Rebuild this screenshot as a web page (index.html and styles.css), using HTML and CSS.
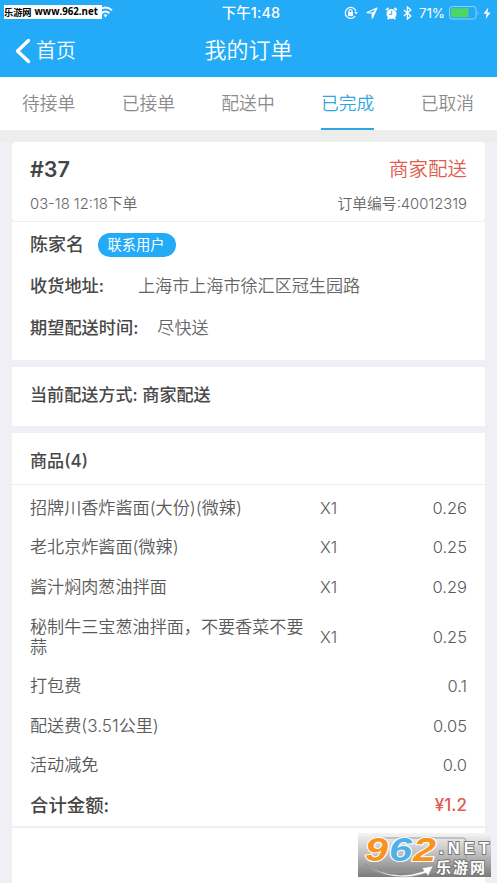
FILE: index.html
```html
<!DOCTYPE html>
<html lang="zh-CN">
<head>
<meta charset="utf-8">
<title>我的订单</title>
<link rel="stylesheet" href="styles.css">
</head>
<body>
<header class="top">
  <div class="status">
    <svg class="wifi" width="15" height="12" viewBox="0 0 15 12" fill="none" stroke="#fff" stroke-width="2"><path d="M1 4.2Q7.5-1.2 14 4.2M3.6 7.1Q7.5 4 11.4 7.1"/><path d="M5.5 9.1Q7.5 7.6 9.5 9.1L7.5 11.4Z" fill="#fff" stroke="none"/></svg>
    <span class="clock">下午1:48</span>
    <div class="status-right">
      <svg width="14" height="14" viewBox="0 0 14 14" fill="none" stroke="#fff" stroke-width="1.2"><path d="M11.2 10.2A5.5 5.5 0 1 1 12 5.2"/><path d="M10.3 6.1h3.4L12 8.6Z" fill="#fff" stroke="none"/><rect x="4" y="6.1" width="5" height="4" fill="#fff" stroke="none"/><path d="M5 6.3V5a1.5 1.5 0 0 1 3 0v1.3"/></svg>
      <svg class="gap-a" width="12" height="12" viewBox="0 0 12 12" fill="none" stroke="#fff" stroke-width="1.1" stroke-linejoin="round"><path d="M11 1L1 5.6l5 .4.3 5.2Z"/><path d="M11 1L6 6l.3 5.2Z" fill="#fff" stroke="none"/></svg>
      <svg class="gap-b" width="13" height="13" viewBox="0 0 13 13"><circle cx="6.5" cy="7" r="5" fill="#fff"/><path d="M1.2 3.2L3.5 1M9.5 1l2.3 2.2M2.8 12.2l1-1.4M10.2 12.2l-1-1.4" stroke="#fff" stroke-width="1.8"/><path d="M6.7 3.8v3.5H4" fill="none" stroke="#24abf7"/></svg>
      <svg class="gap-c" width="9" height="14" viewBox="0 0 9 14" fill="none" stroke="#fff" stroke-width="1.3"><path d="M.8 4l7 6-3.4 3V1l3.4 3-7 6"/></svg>
      <span class="percent">71%</span>
      <svg width="43" height="14" viewBox="0 0 43 14"><rect x=".5" y=".5" width="26.5" height="12.5" rx="2.5" fill="none" stroke="#8fd2f8"/><rect x="2" y="2.3" width="17.5" height="9" rx="1" fill="#4bd764"/><path d="M28.6 5q2 2 0 4Z" fill="#8fd2f8"/><path d="M39.3 1.5L34.5 7.8h3L36.6 13l5-6.6h-3.2Z" fill="#fff"/></svg>
    </div>
    <div class="site-label"><b>乐游网</b><b class="site-url">www.962.net</b></div>
  </div>
  <nav class="nav">
    <a class="back"><svg width="16" height="26" viewBox="0 0 16 26" fill="none" stroke="#fff" stroke-width="3.4" stroke-linecap="round" stroke-linejoin="round"><path d="M13.5 2.5L2.5 13l11 10.5"/></svg><span>首页</span></a>
    <h1>我的订单</h1>
  </nav>
</header>
<div class="tabs">
  <span class="tab">待接单</span><span class="tab">已接单</span><span class="tab">配送中</span><span class="tab active">已完成</span><span class="tab">已取消</span>
</div>
<main>
  <section class="card summary">
    <div class="line"><b class="num">#37</b><span class="mode">商家配送</span></div>
    <div class="line meta"><span>03-18 12:18下单</span><span>订单编号:40012319</span></div>
  </section>
  <section class="card customer">
    <div class="field"><b class="name">陈家名</b><button class="contact">联系用户</button></div>
    <div class="field"><b>收货地址:</b><span class="address">上海市上海市徐汇区冠生园路</span></div>
    <div class="field"><b>期望配送时间:</b><span class="when">尽快送</span></div>
  </section>
  <section class="card method"><b>当前配送方式: 商家配送</b></section>
  <section class="card goods">
    <h2>商品(4)</h2>
    <div class="rows">
      <div class="row"><span>招牌川香炸酱面(大份)(微辣)</span><i>X1</i><em>0.26</em></div>
      <div class="row"><span>老北京炸酱面(微辣)</span><i>X1</i><em>0.25</em></div>
      <div class="row"><span>酱汁焖肉葱油拌面</span><i>X1</i><em>0.29</em></div>
      <div class="row tall"><span>秘制牛三宝葱油拌面，不要香菜不要蒜</span><i>X1</i><em>0.25</em></div>
      <div class="row"><span>打包费</span><i></i><em>0.1</em></div>
      <div class="row"><span>配送费(3.51公里)</span><i></i><em>0.05</em></div>
      <div class="row"><span>活动减免</span><i></i><em>0.0</em></div>
      <div class="row total"><span>合计金额:</span><i></i><em>¥1.2</em></div>
    </div>
  </section>
  <section class="card actions"></section>
</main>
<div class="watermark">
  <svg width="133" height="44" viewBox="0 0 133 44">
    <defs><linearGradient id="shade" x1="0" y1="0" x2="0" y2="1"><stop offset="0" stop-color="#f4f4f4"/><stop offset=".5" stop-color="#bcbcbc"/><stop offset="1" stop-color="#7b7b7b"/></linearGradient></defs>
    <rect width="133" height="44" fill="url(#shade)"/>
    <rect x="14" y="5" width="94" height="34" rx="3" fill="none" stroke="#999"/>
    <g class="digits"><text x="7" y="28" fill="#f7931e" textLength="23" lengthAdjust="spacingAndGlyphs">9</text><text x="31" y="28" fill="#4fb0e8" textLength="23" lengthAdjust="spacingAndGlyphs">6</text><text x="55" y="28" fill="#f7931e" textLength="23" lengthAdjust="spacingAndGlyphs">2</text></g>
    <text class="net" x="81" y="21" textLength="50">.NET</text>
    <text class="cn" x="78" y="40" textLength="49">乐游网</text>
    <path d="M7 31Q34 49 66 38L64 35l11-2-5 10-2-3Q34 51 7 31Z" fill="#fff" stroke="#888" stroke-width=".5"/>
  </svg>
</div>
</body>
</html>
```
FILE: styles.css
```css
* { box-sizing: border-box; }
body {
  margin: 0;
  height: 883px;
  overflow: hidden;
  position: relative;
  background: #efeff5;
  color: #5a5a5a;
  font: 350 17.1px/20px Inter, "Noto Sans CJK SC", sans-serif;
}
b, h1, h2, i, em { font-weight: inherit; font-style: normal; margin: 0; }
.top { height: 77px; background: #24abf7; color: #fff; }
.status { position: relative; height: 26px; display: flex; align-items: center; justify-content: center; }
.wifi { position: absolute; left: 98px; top: 6px; }
.clock { font-size: 14.4px; font-weight: 500; letter-spacing: .15px; padding-left: 5px; }
.status-right { position: absolute; right: 5px; top: 0; height: 26px; display: flex; align-items: center; }
.gap-a { margin-left: 8px; }
.gap-b { margin-left: 7px; }
.gap-c { margin-left: 5px; }
.percent { margin: 0 4px 0 7px; font-size: 13.5px; font-weight: 400; width: 26px; white-space: nowrap; letter-spacing: -.2px; }
.site-label { position: absolute; left: 4px; top: 5px; width: 98px; height: 14px; display: flex; align-items: center; gap: 3px; background: #fff; color: #000; font: 700 9.2px/14px "Noto Sans CJK SC", sans-serif; white-space: nowrap; }
.site-label b { font-weight: 700; }
.site-url { font-family: "Open Sans", sans-serif; font-size: 9.7px; }
.nav { height: 50px; display: grid; grid-template-columns: 1fr auto 1fr; align-items: center; }
.back { display: flex; align-items: center; gap: 5px; padding-left: 15px; font-size: 20px; }
h1 { font-size: 22px; line-height: 28px; margin-top: -2px; }
.tabs { height: 65px; border-bottom: 12px solid #ededeb; background: #fff; display: flex; justify-content: space-between; padding: 0 23px 0 22px; color: #8b8b8b; font-size: 17.8px; }
.tab { height: 53px; padding-top: 17px; }
.active { color: #31a5df; border-bottom: 2px solid #31a5df; }
main { padding: 0 12px; }
.card { background: #fff; padding: 0 18px; }
.summary { height: 79px; border-radius: 4px; padding-top: 12px; margin-bottom: 1px; }
.line { display: flex; justify-content: space-between; align-items: center; height: 30px; }
.num { font-size: 21.5px; font-weight: 600; color: #444; }
.mode { color: #e15b4e; font-size: 19.5px; }
.meta { font-size: 14.8px; height: 40px; color: #666; }
.customer { height: 138px; padding-top: 2px; margin-bottom: 7px; }
.field { height: 41.5px; display: flex; align-items: center; color: #666; }
.field b, .method b, h2 { color: #484848; font-weight: 500; }
.field b { font-size: 17.2px; }
.field .name { font-size: 18px; }
.contact { margin-left: 14px; width: 78px; height: 24px; border: 0; border-radius: 12px; background: #24abf7; color: #fff; font: 400 14.3px/22px Inter, "Noto Sans CJK SC", sans-serif; padding: 0 2px 0 0; }
.address { margin-left: 34px; }
.when { margin-left: 19px; }
.method { height: 59px; line-height: 56px; margin-bottom: 7px; }
.goods { height: 393px; padding: 0; margin-bottom: 2px; }
h2 { height: 52px; padding: 0 18px; line-height: 56px; font-size: 17.1px; border-bottom: 1px solid #ececf2; }
.rows { padding: 3px 18px 0; }
.row { display: grid; grid-template-columns: 290px 60px 1fr; align-items: center; height: 39.6px; }
.row span { width: 277px; }
.row i { font-size: 16.3px; }
.row em { font-size: 16.5px; text-align: right; }
.tall { height: 59.6px; }
.total span { font-size: 18.4px; font-weight: 500; color: #444; }
.total em { color: #e15b4e; font-weight: 500; font-size: 17px; }
.actions { height: 55px; }
.watermark { position: absolute; left: 358px; top: 833px; width: 133px; height: 44px; }
.watermark svg { display: block; overflow: visible; }
.digits { font: italic 700 33px "Liberation Sans", sans-serif; stroke: #fff; stroke-width: 2px; paint-order: stroke; }
.net, .cn { fill: #fff; stroke: #777; stroke-width: 2px; paint-order: stroke; }
.net { font: 700 16.5px "Liberation Sans", sans-serif; }
.cn { font: 700 15px "Noto Sans CJK SC", sans-serif; }
```
